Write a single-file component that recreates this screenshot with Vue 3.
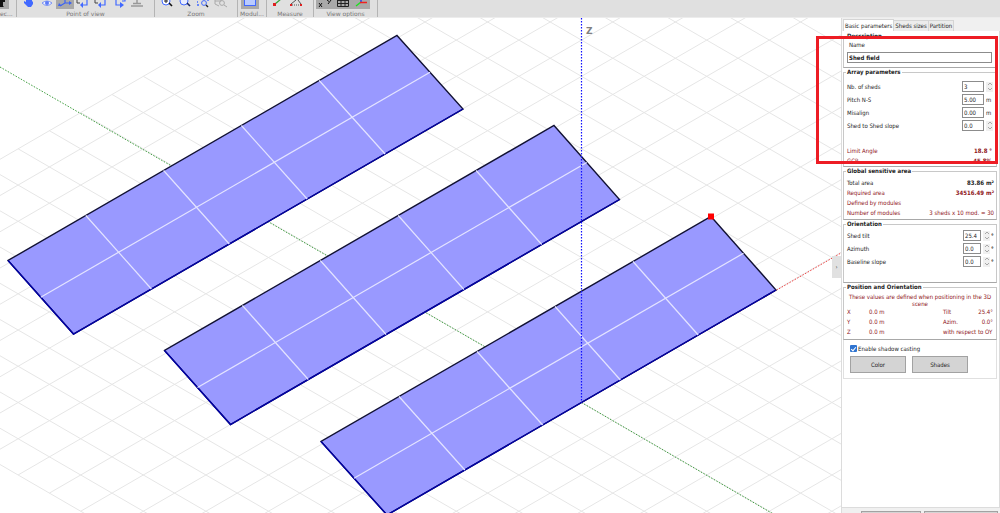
<script setup>
import { ref } from 'vue'

const toolGroups = [
  { name: 'selection', label: 'ec...', tools: [{ id: 'select', on: true }] },
  { name: 'pov', label: 'Point of view', tools: [{ id: 'hand' }, { id: 'eye' }, { id: 'perspective', on: true }, { id: 'front' }, { id: 'side' }, { id: 'back' }, { id: 'top' }] },
  { name: 'zoom', label: 'Zoom', tools: [{ id: 'zoomin' }, { id: 'zoomout' }, { id: 'zoomarea' }, { id: 'zoomall' }] },
  { name: 'modules', label: 'Modul...', tools: [{ id: 'module', on: true }] },
  { name: 'measure', label: 'Measure', tools: [{ id: 'distance' }, { id: 'angle' }] },
  { name: 'options', label: 'View options', tools: [{ id: 'xy', on: true }, { id: 'grid', on: true }, { id: 'axes', on: true }] }
]

// Isometric ground grid: i runs up-right, j runs down-right from the origin.
const H = 31.3
const V = 18.12
const OX = 581.5
const OY = 402.5
const at = (i, j) => ({ x: OX + (i + j) * H, y: OY + (j - i) * V })
const gridLines = []
for (let j = -16; j <= 24; j++) gridLines.push([at(-11, j), at(32, j)])
for (let i = -11; i <= 32; i++) gridLines.push([at(i, -16), at(i, 24)])

const sheds = [
  [[397, 35.5], [463, 109], [73.5, 334], [8, 260.5]],
  [[554, 125.5], [619.5, 199.5], [230.5, 424.5], [164.5, 350.5]],
  [[711, 216.5], [776, 290], [387, 515], [321, 441.5]]
].map(([tr, br, bl, tl]) => {
  const mix = (a, b, t) => [a[0] + (b[0] - a[0]) * t, a[1] + (b[1] - a[1]) * t]
  const seams = [0.2, 0.4, 0.6, 0.8].map(t => [mix(tl, tr, t), mix(bl, br, t)])
  seams.push([mix(tl, bl, 0.5), mix(tr, br, 0.5)])
  return { outline: [tr, br, bl, tl].join(' '), lower: [br, bl, tl].join(' '), seams }
})

const tabs = ['Basic parameters', 'Sheds sizes', 'Partition']
const active = ref(0)
const name = ref('Shed field')
const shadow = ref(true)
const arrayFields = ref([
  { id: 'nb', label: 'Nb. of sheds', value: '3', spin: true, unit: '' },
  { id: 'pitch', label: 'Pitch N-S', value: '5.00', spin: false, unit: 'm' },
  { id: 'misalign', label: 'Misalign', value: '0.00', spin: false, unit: 'm' },
  { id: 'slope', label: 'Shed to Shed slope', value: '0.0', spin: true, unit: '' }
])
const orientFields = ref([
  { id: 'tilt', label: 'Shed tilt', value: '25.4', unit: '°' },
  { id: 'azimuth', label: 'Azimuth', value: '0.0', unit: '°' },
  { id: 'baseline', label: 'Baseline slope', value: '0.0', unit: '°' }
])
</script>

<template>
  <div class="app">
    <header class="toolbar">
      <div v-for="g in toolGroups" :key="g.name" class="tool-group" :class="g.name">
        <div class="tools">
          <button v-for="t in g.tools" :key="t.id" type="button" class="tool" :class="{ on: t.on }" :aria-label="t.id">
            <svg width="18" height="9" viewBox="0 0 18 9" fill="none">
              <template v-if="t.id === 'select'">
                <path d="M9 0h5v2h-2v4l1 1H9V2H8V0z" fill="#111" />
              </template>
              <template v-else-if="t.id === 'hand'">
                <path d="M6 0h6v2l1-1v3l-2 3H8L4 3V1l2 1z" fill="#4169ff" />
              </template>
              <template v-else-if="t.id === 'eye'">
                <path d="M4 3Q9-1 14 3Q9 8 4 3z" stroke="#7b94f5" fill="#eef1ff" />
                <circle cx="9" cy="3" r="2" fill="#5e7cf7" />
              </template>
              <template v-else-if="t.id === 'perspective'">
                <path d="M4 6l5-3V0M9 3h5" stroke="#3b62f5" stroke-width="1.2" />
                <path d="M13 1l3 2-3 2zM3 3l3 3H2z" fill="#3b62f5" />
              </template>
              <template v-else-if="t.id === 'front' || t.id === 'side'">
                <path d="M3 0v3h3" stroke="#444" />
                <path d="M8 5h5V0" stroke="#4169ff" stroke-width="1.2" />
                <path d="M9 2v6l-3-3z" fill="#4169ff" />
              </template>
              <template v-else-if="t.id === 'back'">
                <path d="M6 0v5h5M15 0v1h-3" stroke="#4169ff" stroke-width="1.2" />
                <path d="M10 2l4 3-4 3z" fill="#4169ff" />
              </template>
              <template v-else-if="t.id === 'top'">
                <path d="M9 0v3M5 3.500h8M3 6h12" stroke="#999" stroke-width="1.500" />
              </template>
              <template v-else-if="t.id === 'zoomin'">
                <circle cx="8" cy="1" r="4" stroke="#4169ff" fill="#fff" />
                <path d="M6 1h4M8 0v3" stroke="#222" />
                <path d="M11 3l3 3" stroke="#111" stroke-width="1.600" />
              </template>
              <template v-else-if="t.id === 'zoomout'">
                <circle cx="8" cy="1" r="4" stroke="#4169ff" fill="#e9edff" />
                <path d="M11 3l3 3" stroke="#1a2560" stroke-width="1.600" />
              </template>
              <template v-else-if="t.id === 'zoomarea'">
                <path d="M3 2h1M3 5h2M14 0v1" stroke="#4169ff" stroke-width="1.400" />
                <circle cx="10" cy="3" r="2.400" stroke="#4169ff" />
                <path d="M12 5l2 2" stroke="#222" stroke-width="1.400" />
              </template>
              <template v-else-if="t.id === 'zoomall'">
                <path d="M3 0v4l4 2M3 1h6V0" stroke="#aaa" />
                <circle cx="10" cy="3" r="2.400" stroke="#aaa" />
                <path d="M12 5l3 2" stroke="#aaa" />
              </template>
              <template v-else-if="t.id === 'module'">
                <rect x="3.500" y="-3" width="11" height="8.500" fill="#b9cbff" stroke="#4169ff" />
              </template>
              <template v-else-if="t.id === 'distance'">
                <path d="M5 4l6-5" stroke="#33a033" stroke-width="1.200" />
                <path d="M3 3h3v3H3z" fill="#e02020" />
              </template>
              <template v-else-if="t.id === 'angle'">
                <path d="M3 4l5-4M10 0l3 4" stroke="#555" />
                <path d="M4 5h8" stroke="#555" stroke-dasharray="1 1" />
                <path d="M2 4h2v2H2zM12 4h2v2h-2z" fill="#e02020" />
              </template>
              <template v-else-if="t.id === 'xy'">
                <path d="M3 3l3 4M6 3L3 7M11 0l2 1.500M15 0l-3 4" stroke="#111" />
              </template>
              <template v-else-if="t.id === 'grid'">
                <path d="M3.500 0v6.500h11V0M7 0v6M11 0v6M3 3.500h11M3 .500h11" stroke="#222" />
              </template>
              <template v-else>
                <path d="M9 2V0" stroke="#2040ff" stroke-width="1.500" />
                <path d="M9 2l-5 4" stroke="#1ee01e" stroke-width="1.500" />
                <path d="M8 2.500h7" stroke="#f02020" stroke-width="1.500" />
              </template>
            </svg>
          </button>
        </div>
        <span class="group-label">{{ g.label }}</span>
      </div>
    </header>

    <div class="body">
      <main class="scene">
        <svg class="canvas" viewBox="0 18 841 495" preserveAspectRatio="xMidYMid slice">
          <g stroke="#e6e6e6" stroke-width="1">
            <line v-for="(l, k) in gridLines" :key="k" :x1="l[0].x" :y1="l[0].y" :x2="l[1].x" :y2="l[1].y" />
          </g>
          <line x1="0" y1="67" :x2="OX" :y2="OY" class="axis-y" />
          <line :x1="OX" :y1="OY" x2="775" y2="515" class="axis-y" />
          <line :x1="OX" :y1="OY" x2="841" y2="253" class="axis-x" />
          <g v-for="(s, k) in sheds" :key="k">
            <polygon :points="s.outline" fill="#9999ff" stroke="#111133" stroke-width="1.4" />
            <polyline :points="s.lower" fill="none" stroke="#0000a8" stroke-width="1.4" />
            <line v-for="(m, n) in s.seams" :key="n" :x1="m[0][0]" :y1="m[0][1]" :x2="m[1][0]" :y2="m[1][1]" stroke="#e4e4ff" stroke-width="1.2" />
          </g>
          <line :x1="OX" y1="18" :x2="OX" :y2="OY" class="axis-z" />
          <rect x="708" y="213.500" width="6" height="6" fill="#ff0000" />
          <text x="586" y="34" class="axis-name">Z</text>
        </svg>
        <button type="button" class="collapse" aria-label="Collapse panel">›</button>
      </main>

      <aside class="panel">
        <nav class="tabs">
          <button v-for="(t, k) in tabs" :key="t" type="button" class="tab" :class="{ active: k === active }" @click="active = k">{{ t }}</button>
        </nav>
        <div class="page">
          <fieldset class="description">
            <legend>Description</legend>
            <label for="name">Name</label>
            <input id="name" v-model="name" type="text">
          </fieldset>

          <fieldset class="array">
            <legend>Array parameters</legend>
            <div v-for="f in arrayFields" :key="f.id" class="field">
              <label :for="f.id">{{ f.label }}</label>
              <input :id="f.id" v-model="f.value" type="text">
              <span class="after">
                <span v-if="f.spin" class="spin">
                  <button type="button" aria-label="Increase"><svg width="4" height="2" viewBox="0 0 4 2"><path d="M0 2l2-2 2 2" /></svg></button>
                  <button type="button" aria-label="Decrease"><svg width="4" height="2" viewBox="0 0 4 2"><path d="M0 0l2 2 2-2" /></svg></button>
                </span>
                {{ f.unit }}
              </span>
            </div>
            <dl class="results">
              <div class="calc"><dt>Limit Angle</dt><dd><b>18.8 °</b></dd></div>
              <div class="calc"><dt>GCR</dt><dd><b>45.8%</b></dd></div>
            </dl>
          </fieldset>

          <fieldset class="area">
            <legend>Global sensitive area</legend>
            <dl>
              <div><dt>Total area</dt><dd><b>83.86 m²</b></dd></div>
              <div class="calc"><dt>Required area</dt><dd><b>34516.49 m²</b></dd></div>
              <div class="calc"><dt>Defined by modules</dt></div>
              <div class="calc"><dt>Number of modules</dt><dd>3 sheds x 10 mod. = 30</dd></div>
            </dl>
          </fieldset>

          <fieldset class="orientation">
            <legend>Orientation</legend>
            <div v-for="f in orientFields" :key="f.id" class="field">
              <label :for="f.id">{{ f.label }}</label>
              <input :id="f.id" v-model="f.value" type="text">
              <span class="after">
                <span class="spin">
                  <button type="button" aria-label="Increase"><svg width="4" height="2" viewBox="0 0 4 2"><path d="M0 2l2-2 2 2" /></svg></button>
                  <button type="button" aria-label="Decrease"><svg width="4" height="2" viewBox="0 0 4 2"><path d="M0 0l2 2 2-2" /></svg></button>
                </span>
                <b>{{ f.unit }}</b>
              </span>
            </div>
          </fieldset>

          <fieldset class="position calc">
            <legend>Position and Orientation</legend>
            <p>These values are defined when positioning in the 3D scene</p>
            <div class="coords">
              <span>X</span><span>0.0 m</span><span>Tilt</span><span class="num">25.4°</span>
              <span>Y</span><span>0.0 m</span><span>Azim.</span><span class="num">0.0°</span>
              <span>Z</span><span>0.0 m</span><span class="wide">with respect to OY</span>
            </div>
          </fieldset>

          <section class="display">
            <label class="check">
              <input v-model="shadow" type="checkbox">
              <span>Enable shadow casting</span>
            </label>
            <div class="actions">
              <button type="button">Color</button>
              <button type="button">Shades</button>
            </div>
          </section>
        </div>
        <footer class="footer">
          <button type="button" aria-label="Apply"></button>
          <button type="button" aria-label="Close"></button>
        </footer>
      </aside>
    </div>

    <div class="highlight"></div>
  </div>
</template>

<style>
html, body { height: 100%; }
#app { height: 100%; }
body { margin: 0; background: #fff; }
</style>

<style scoped>
.app {
  position: relative;
  display: flex;
  flex-direction: column;
  height: 100vh;
  overflow: hidden;
  font: 6px/8px "DejaVu Sans Condensed", "DejaVu Sans", sans-serif;
  color: #1c1c1c;
}
.app * { box-sizing: border-box; }
button, input { font: inherit; color: inherit; margin: 0; padding: 0; border-radius: 0; }

.toolbar {
  display: flex;
  flex: none;
  height: 18px;
  background: #e0e0e0;
  border-bottom: 1px solid #ececec;
}
.tool-group {
  display: flex;
  flex-direction: column;
  align-items: center;
  border-right: 1px solid #b4b4b4;
  overflow: hidden;
}
.tools { display: flex; width: 100%; height: 9px; padding-left: 3px; }
.selection .tools { padding-left: 0; justify-content: flex-end; padding-right: 7px; }
.selection { width: 17px; }
.selection .group-label { align-self: flex-start; }
.pov { width: 138px; }
.zoom { width: 83px; }
.modules { width: 29px; }
.measure { width: 47px; }
.options { width: 64px; }
.options .tools { padding-left: 2px; }
.tool { flex: none; width: 18px; height: 9px; border: 0; background: none; }
.tool.on { background: #a9a9a9; }
.tool svg { display: block; }
.group-label {
  font: 6px/9px "DejaVu Sans", sans-serif;
  color: #777;
  white-space: nowrap;
}

.body { display: flex; flex: 1; min-height: 0; }
.scene { position: relative; flex: 1; min-width: 0; background: #fff; }
.canvas { display: block; width: 100%; height: 100%; }
.axis-y { stroke: #3c9c3c; stroke-width: 1; stroke-dasharray: 1.5 1.5; }
.axis-x { stroke: #f04040; stroke-width: 1; stroke-dasharray: 1.5 1.5; }
.axis-z { stroke: #1010ff; stroke-width: 1.2; stroke-dasharray: 1.5 1.5; }
.axis-name { font: bold 9px "DejaVu Sans", sans-serif; fill: #808080; }
.collapse {
  position: absolute;
  right: 0;
  top: 48%;
  width: 9px;
  height: 22px;
  border: 0;
  background: #e1e1e1;
  color: #333;
}

.panel {
  display: flex;
  flex-direction: column;
  flex: none;
  width: 159px;
  border-left: 1px solid #dcdcdc;
  background: #fff;
}
.tabs {
  display: flex;
  flex: none;
  align-items: flex-end;
  height: 13px;
  padding-left: 1px;
  background: #f0f0f0;
}
.tab {
  height: 11px;
  padding: 0 1px;
  border: 1px solid #d5d5d5;
  border-bottom: 0;
  border-left: 0;
  background: #ececec;
  line-height: 10px;
  white-space: nowrap;
}
.tab.active { height: 12px; background: #fff; border-left: 1px solid #d5d5d5; }

.page { flex: 1; padding: 1px 2px 0 1px; overflow: hidden; border-right: 1px solid #dcdcdc; }
fieldset {
  display: block;
  min-width: 0;
  margin: 0;
  padding: 0 4px 0 3px;
  border: 1px solid #c8c8c8;
  border-bottom-color: #a8a8a8;
}
legend { padding: 0 1px; margin-left: -1px; font-weight: bold; line-height: 8px; color: #1c1c1c; }
label { white-space: nowrap; }
input[type="text"] {
  min-width: 0;
  height: 11px;
  padding: 0 1px;
  border: 1px solid #8c8c8c;
  background: #fff;
  outline: 0;
}

.description label { display: block; padding-left: 2px; line-height: 10px; }
.description input { display: block; width: 100%; margin: 2px 0 4px; font-weight: bold; }

.field {
  display: grid;
  grid-template-columns: 1fr 22px 7px;
  align-items: center;
  height: 13px;
}
.array .field { column-gap: 1px; }
.array { padding-top: 4px; }
.orientation { padding: 1px 0 14px 3px; }
.orientation .field { grid-template-columns: 1fr 18px 14px; column-gap: 1px; }
.after { display: flex; align-items: center; gap: 1px; padding-left: 1px; }
.spin { display: flex; flex-direction: column; }
.spin button {
  display: flex;
  align-items: center;
  justify-content: center;
  width: 7px;
  height: 5px;
  border: 0;
  background: #f0f0f0;
}
.spin path { fill: none; stroke: #a8a8a8; stroke-width: 1; }

dl, dd, p { margin: 0; }
dl > div { display: flex; justify-content: space-between; line-height: 10px; white-space: nowrap; }
.calc { color: #8e1420; }
.results { margin-top: 14px; }
.area { padding: 3px 2px 1px 3px; }

.position { padding: 2px 3px; }
.position p { text-align: center; line-height: 7px; }
.coords {
  display: grid;
  grid-template-columns: 22px 1fr 24px 26px;
  line-height: 10px;
  white-space: nowrap;
}
.num { text-align: right; }
.wide { grid-column: 3 / 5; }

.display {
  padding: 4px 6px 5px;
  border: 1px solid #e0e0e0;
  border-top: 0;
}
.check { display: flex; align-items: center; gap: 1px; height: 9px; }
.check input {
  appearance: none;
  width: 7px;
  height: 7px;
  border-radius: 1px;
  background: #2f74d0;
  position: relative;
}
.check input:checked::after {
  content: "";
  position: absolute;
  left: 2px;
  top: 1px;
  width: 2px;
  height: 4px;
  border: solid #fff;
  border-width: 0 1px 1px 0;
  transform: rotate(40deg);
}
.actions { display: flex; gap: 6px; margin-top: 3px; }
.actions button { width: 56px; height: 17px; border: 1px solid #a2a2a2; background: #d4d4d4; }

.footer { display: flex; flex: none; gap: 3px; height: 6px; padding: 3px 2px 0 19px; border-top: 1px solid #dcdcdc; background: #f0f0f0; overflow: hidden; }
.footer button { flex: 74; height: 16px; border: 1px solid #a2a2a2; background: #d4d4d4; }
.footer button:first-child { flex: 60; }

.highlight {
  position: absolute;
  right: 2px;
  top: 36px;
  width: 182px;
  height: 128px;
  border: 3px solid #ed1c24;
  pointer-events: none;
}
</style>
